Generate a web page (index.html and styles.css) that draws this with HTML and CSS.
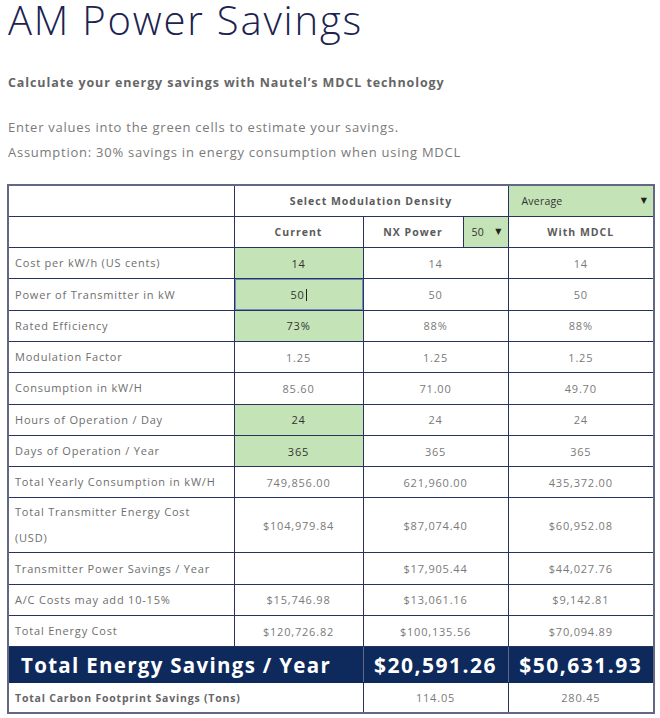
FILE: index.html
```html
<!DOCTYPE html>
<html>
<head>
<meta charset="utf-8">
<link rel="stylesheet" href="styles.css">
</head>
<body>
<div class="page">
  <h1 class="title">AM Power Savings</h1>
  <h2 class="subtitle">Calculate your energy savings with Nautel’s MDCL technology</h2>
  <p class="intro">Enter values into the green cells to estimate your savings.<br>Assumption: 30% savings in energy consumption when using MDCL</p>
  <table class="calc">
    <colgroup>
      <col class="c1"><col class="c2"><col class="c3a"><col class="c3b"><col class="c4">
    </colgroup>
    <tr>
      <td></td>
      <td colspan="3" class="head">Select Modulation Density</td>
      <td class="select"><span class="sel-row"><span>Average</span><span class="arrow">▼</span></span></td>
    </tr>
    <tr>
      <td></td>
      <td class="head">Current</td>
      <td class="head">NX Power</td>
      <td class="select small"><span class="sel-row"><span>50</span><span class="arrow">▼</span></span></td>
      <td class="head">With MDCL</td>
    </tr>
    <tr><td class="label">Cost per kW/h (US cents)</td><td class="input">14</td><td colspan="2" class="val">14</td><td class="val">14</td></tr>
    <tr><td class="label">Power of Transmitter in kW</td><td class="input focus">50<span class="caret"></span></td><td colspan="2" class="val">50</td><td class="val">50</td></tr>
    <tr><td class="label">Rated Efficiency</td><td class="input">73%</td><td colspan="2" class="val">88%</td><td class="val">88%</td></tr>
    <tr><td class="label">Modulation Factor</td><td class="val">1.25</td><td colspan="2" class="val">1.25</td><td class="val">1.25</td></tr>
    <tr><td class="label">Consumption in kW/H</td><td class="val">85.60</td><td colspan="2" class="val">71.00</td><td class="val">49.70</td></tr>
    <tr><td class="label">Hours of Operation / Day</td><td class="input">24</td><td colspan="2" class="val">24</td><td class="val">24</td></tr>
    <tr><td class="label">Days of Operation / Year</td><td class="input">365</td><td colspan="2" class="val">365</td><td class="val">365</td></tr>
    <tr><td class="label">Total Yearly Consumption in kW/H</td><td class="val">749,856.00</td><td colspan="2" class="val">621,960.00</td><td class="val">435,372.00</td></tr>
    <tr class="tall"><td class="label">Total Transmitter Energy Cost<br>(USD)</td><td class="val">$104,979.84</td><td colspan="2" class="val">$87,074.40</td><td class="val">$60,952.08</td></tr>
    <tr><td class="label">Transmitter Power Savings / Year</td><td class="val"></td><td colspan="2" class="val">$17,905.44</td><td class="val">$44,027.76</td></tr>
    <tr><td class="label">A/C Costs may add 10-15%</td><td class="val">$15,746.98</td><td colspan="2" class="val">$13,061.16</td><td class="val">$9,142.81</td></tr>
    <tr><td class="label">Total Energy Cost</td><td class="val">$120,726.82</td><td colspan="2" class="val">$100,135.56</td><td class="val">$70,094.89</td></tr>
    <tr class="total"><td colspan="2" class="total-label">Total Energy Savings / Year</td><td colspan="2" class="total-val">$20,591.26</td><td class="total-val">$50,631.93</td></tr>
    <tr class="carbon"><td colspan="2" class="label bold">Total Carbon Footprint Savings (Tons)</td><td colspan="2" class="val">114.05</td><td class="val">280.45</td></tr>
  </table>
</div>
</body>
</html>
```

FILE: styles.css
```css
* { box-sizing: border-box; }
body {
  margin: 0;
  background: #fff;
  font-family: "Open Sans", "DejaVu Sans", sans-serif;
}
.page {
  padding: 0 0 0 7px;
}
.title {
  margin: 0;
  padding-left: 1px;
  font-size: 40px;
  line-height: 40px;
  font-weight: 300;
  letter-spacing: 1.8px;
  color: #1b2350;
}
.subtitle {
  margin: 34px 0 0 0;
  padding-left: 1px;
  font-size: 12.5px;
  line-height: 18px;
  font-weight: 700;
  letter-spacing: 0.9px;
  color: #666;
}
.intro {
  margin: 23px 0 0 0;
  padding-left: 1px;
  font-size: 13px;
  line-height: 25px;
  letter-spacing: 0.75px;
  color: #7a7a7a;
}
.calc {
  margin-top: 19px;
  width: 646px;
  table-layout: fixed;
  border-collapse: collapse;
  border: 2px solid #626784;
}
.c1 { width: 226px; }
.c2 { width: 129px; }
.c3a { width: 100px; }
.c3b { width: 45px; }
.c4 { width: 146px; }
.calc tr { height: 31.3px; }
.calc tr.tall { height: 55px; }
.calc tr.total { height: 36px; }
.calc tr.carbon { height: 30px; }
.calc td {
  border: 1px solid #27325e;
  padding: 0;
  font-size: 11px;
  letter-spacing: 0.8px;
  color: #7a7a7a;
  vertical-align: middle;
}
.calc td.label {
  padding-left: 6px;
  color: #6e6e6e;
  line-height: 26px;
}
.calc td.label.bold {
  font-weight: 700;
  font-size: 10.5px;
  color: #666;
}
.calc td.head {
  text-align: center;
  font-weight: 700;
  font-size: 10.5px;
  letter-spacing: 1px;
  color: #5a5a5a;
}
.calc td.val { text-align: center; }
.calc td.input {
  text-align: center;
  background: #c4e3b6;
  color: #333;
}
.calc td.focus {
  box-shadow: inset 0 0 0 1px #6f8fc0;
}
.caret {
  display: inline-block;
  width: 1px;
  height: 12px;
  margin-left: 1px;
  background: #222;
  vertical-align: -2px;
}
.calc td.select {
  background: #c4e3b6;
  color: #333;
  font-size: 10.5px;
  letter-spacing: 0.2px;
  padding: 0 6px 0 13px;
}
.calc td.select.small { padding: 0 6px 0 8px; }
.sel-row {
  display: flex;
  justify-content: space-between;
  align-items: center;
}
.arrow {
  font-family: "DejaVu Sans", sans-serif;
  font-size: 8px;
  color: #222;
}
.calc tr.total td {
  background: #0e2a5c;
  color: #fff;
  font-weight: 700;
  border-color: #0e2a5c;
  border-left-color: #626784;
  border-right-color: #626784;
}
.calc tr.total td.total-label {
  font-size: 20.5px;
  letter-spacing: 1.3px;
  padding-left: 12px;
}
.calc tr.total td.total-val {
  font-size: 21px;
  letter-spacing: 1.5px;
  text-align: center;
  border-left-color: #0e2a5c;
}
.calc tr.total td.total-val:last-child {
  border-right-color: #626784;
}
```
